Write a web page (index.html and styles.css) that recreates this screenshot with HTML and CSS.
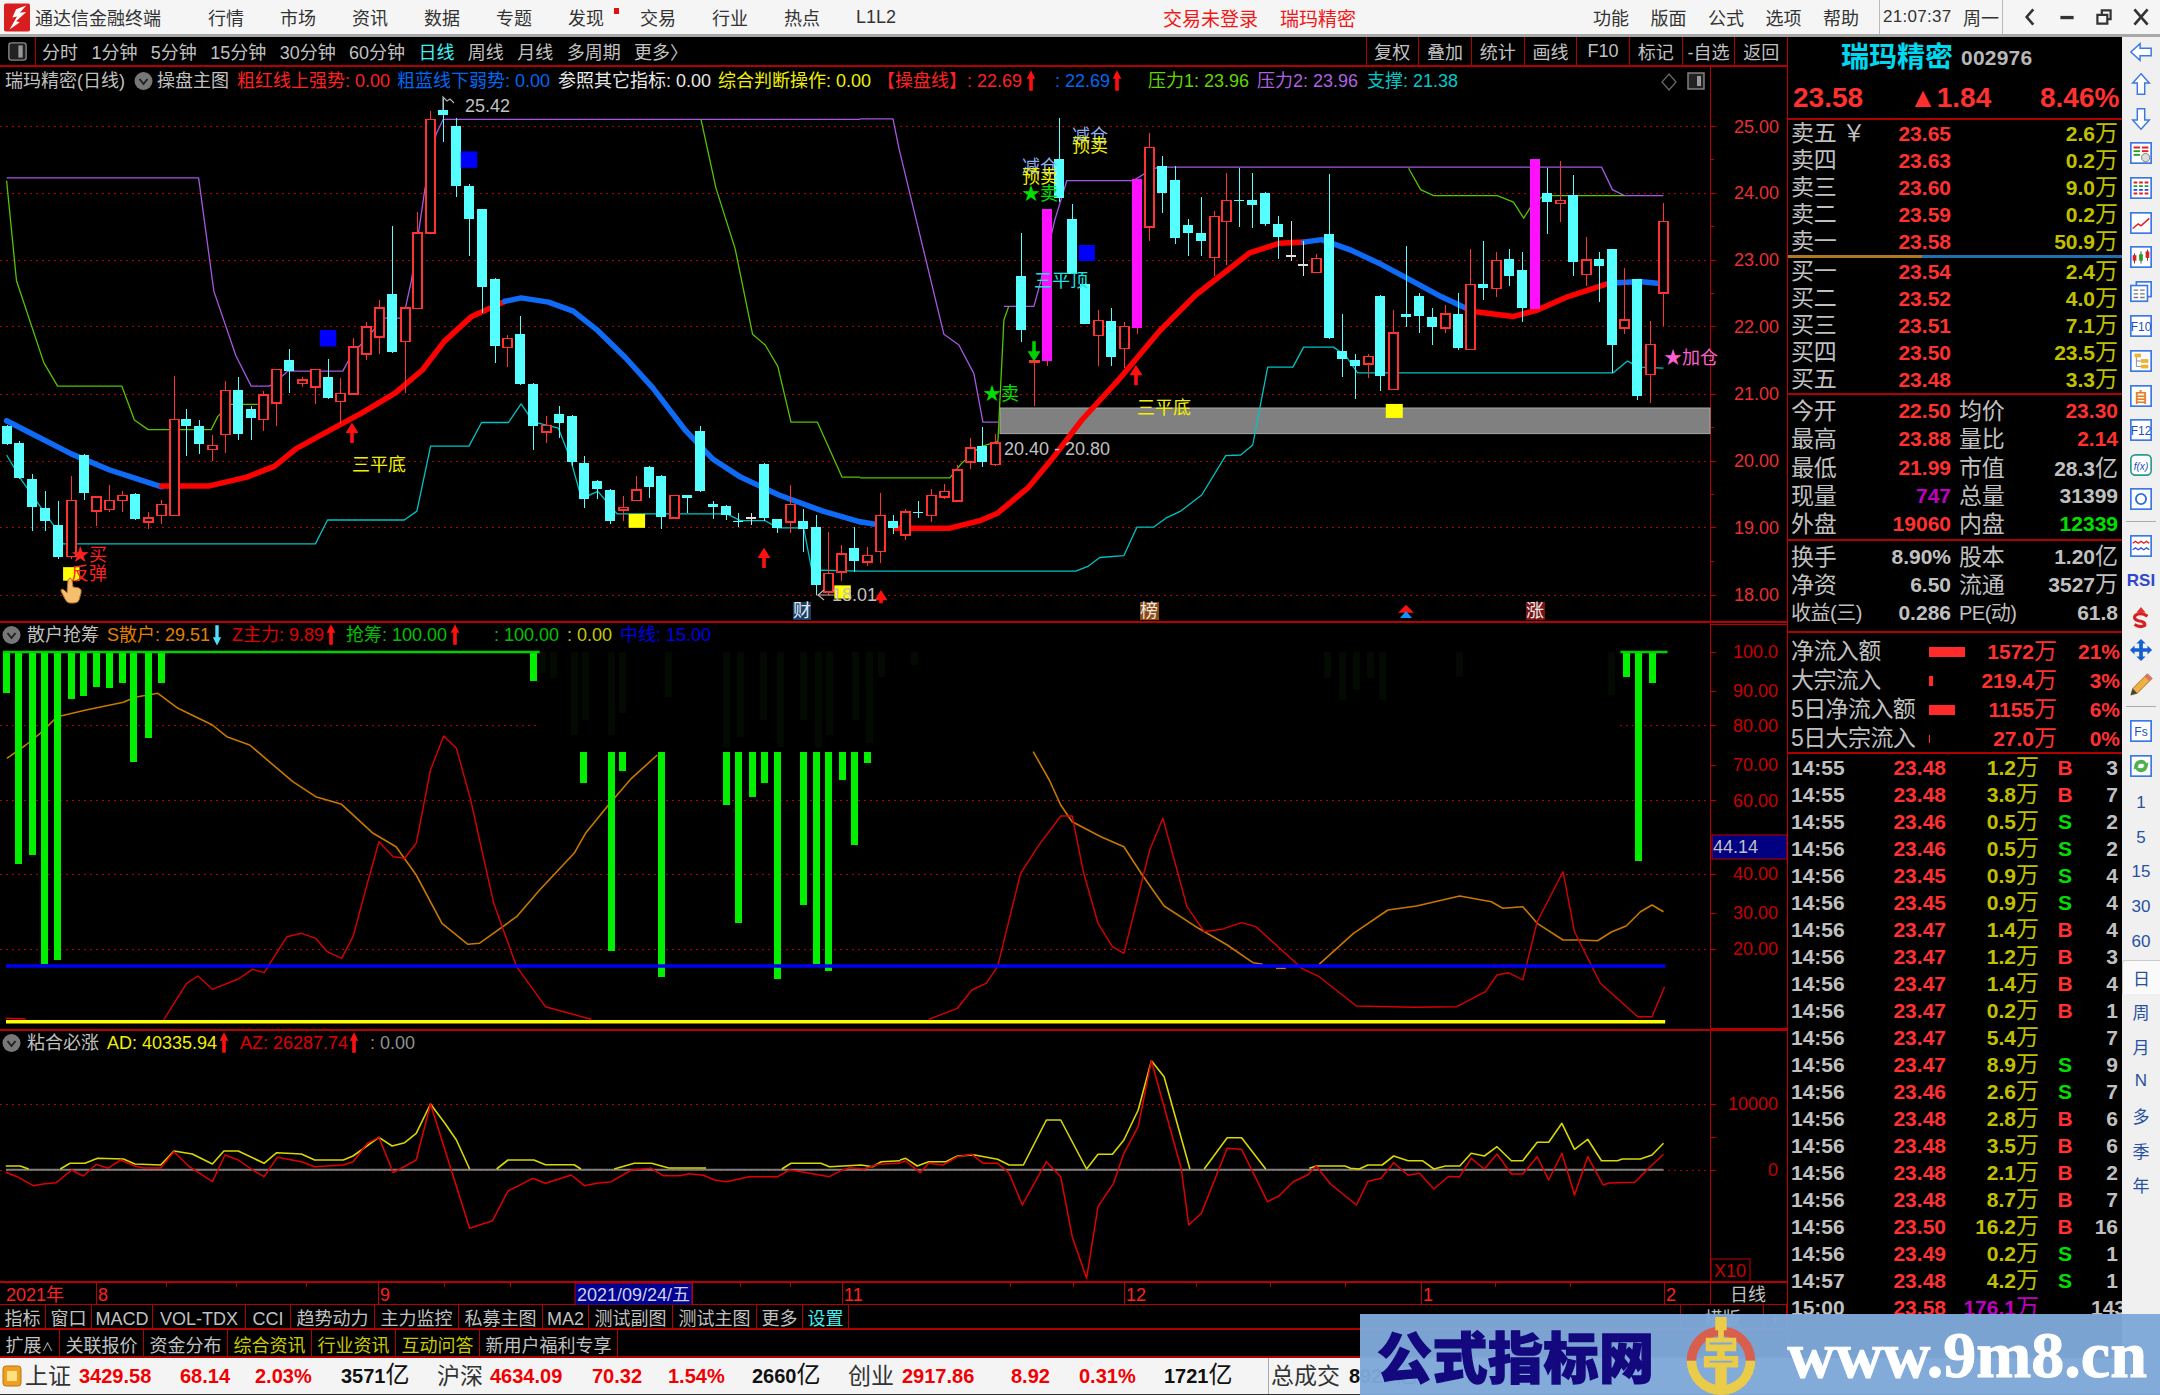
FILE: index.html
```html
<!DOCTYPE html>
<html lang="zh-CN">
<head>
<meta charset="utf-8">
<title>通达信金融终端</title>
<link rel="stylesheet" href="styles.css">
</head>
<body>
<div class="app">
  <header class="titlebar">
    <svg class="logo" viewBox="0 0 28 30"><rect width="28" height="30" rx="2" fill="#d81e1e"/><path d="M24 2 L13 6 L9 15 L14 14 L6 28 L17 20 L13 19 L24 9 L17 10 Z" fill="#fff"/></svg>
    <span class="brand">通达信金融终端</span>
    <nav class="menu">
      <span>行情</span><span>市场</span><span>资讯</span><span>数据</span><span>专题</span><span class="has-dot">发现</span><span>交易</span><span>行业</span><span>热点</span><span>L1L2</span>
    </nav>
    <div class="notice"><span>交易未登录</span><span>瑞玛精密</span></div>
    <nav class="menu-right"><span>功能</span><span>版面</span><span>公式</span><span>选项</span><span>帮助</span></nav>
    <div class="clock"><span class="clock-time">21:07:37</span><span>周一</span></div>
    <div class="winbtns">
      <svg viewBox="0 0 20 20"><path d="M13 3 L7 10 L13 17" fill="none" stroke="#333" stroke-width="2.4"/></svg>
      <svg viewBox="0 0 20 20"><rect x="4" y="9" width="12" height="3" fill="#333"/></svg>
      <svg viewBox="0 0 20 20"><path d="M7 3h10v10h-3v4H3V7h4z M9 5v2h5v4h1V5z M5 9v6h7V9z" fill="#333" fill-rule="evenodd"/></svg>
      <svg viewBox="0 0 20 20"><path d="M4 3 L16 17 M16 3 L4 17" stroke="#333" stroke-width="2.4"/></svg>
    </div>
  </header>

  <div class="workspace">
    <main class="chartcol">
      <div class="toolbar">
        <div class="tb-toggle"><svg viewBox="0 0 22 22"><rect x="1" y="1" width="20" height="20" rx="3" fill="#222" stroke="#888" stroke-width="1.6"/><rect x="12" y="4" width="5" height="14" fill="#999"/></svg></div>
        <div class="tb-periods">
          <span>分时</span><span>1分钟</span><span>5分钟</span><span>15分钟</span><span>30分钟</span><span>60分钟</span><span class="is-active">日线</span><span>周线</span><span>月线</span><span>多周期</span><span>更多〉</span>
        </div>
        <div class="tb-actions"><span>复权</span><span>叠加</span><span>统计</span><span>画线</span><span>F10</span><span>标记</span><span>-自选</span><span>返回</span></div>
      </div>

      <svg id="chart" class="chart-canvas" viewBox="0 67 1787 1238">
        <g id="plots"></g>
        <g class="labels">
          <text class="t gray" x="5" y="81">瑞玛精密(日线)</text>
          <text class="t gray" x="157" y="81">操盘主图</text>
          <text class="t red" x="237" y="81">粗红线上强势: 0.00</text>
          <text class="t blue" x="397" y="81">粗蓝线下弱势: 0.00</text>
          <text class="t white" x="558" y="81">参照其它指标: 0.00</text>
          <text class="t yellow" x="718" y="81">综合判断操作: 0.00</text>
          <text class="t red" x="877" y="81">【操盘线】: 22.69</text>
          <text class="t blue" x="1055" y="81">: 22.69</text>
          <text class="t green" x="1148" y="81">压力1: 23.96</text>
          <text class="t purple" x="1257" y="81">压力2: 23.96</text>
          <text class="t teal" x="1367" y="81">支撑: 21.38</text>

          <text class="t gray" x="465" y="106">25.42</text>
          <text class="t gray" x="1004" y="449">20.40 - 20.80</text>
          <text class="t gray" x="832" y="595">18.01</text>

          <text class="t yellow" x="352" y="465">三平底</text>
          <text class="t yellow" x="1137" y="408">三平底</text>
          <text class="t cyan" x="1034" y="281">三平顶</text>
          <text class="t red" x="71" y="555">★买</text>
          <text class="t red" x="71" y="574">反弹</text>
          <text class="t paleblue" x="1072" y="136">减仓</text>
          <text class="t yellow" x="1072" y="146">预卖</text>
          <text class="t paleblue" x="1022" y="167">减仓</text>
          <text class="t yellow" x="1022" y="177">预卖</text>
          <text class="t brightgreen" x="1022" y="194">★卖</text>
          <text class="t brightgreen" x="983" y="394">★卖</text>
          <text class="t pink" x="1664" y="358">★加仓</text>

          <rect class="mark-blue" x="793" y="602" width="18" height="18"/>
          <text class="t mark-text" x="793" y="611">财</text>
          <rect class="mark-brown" x="1140" y="602" width="19" height="18"/>
          <text class="t mark-text" x="1140" y="611">榜</text>
          <rect class="mark-maroon" x="1526" y="602" width="19" height="18"/>
          <text class="t mark-text" x="1526" y="611">涨</text>

          <text class="t axis" x="1734" y="127">25.00</text>
          <text class="t axis" x="1734" y="193">24.00</text>
          <text class="t axis" x="1734" y="260">23.00</text>
          <text class="t axis" x="1734" y="327">22.00</text>
          <text class="t axis" x="1734" y="394">21.00</text>
          <text class="t axis" x="1734" y="461">20.00</text>
          <text class="t axis" x="1734" y="528">19.00</text>
          <text class="t axis" x="1734" y="595">18.00</text>

          <text class="t gray" x="27" y="635">散户抢筹</text>
          <text class="t orange" x="107" y="635">S散户: 29.51</text>
          <text class="t dimred" x="232" y="635">Z主力: 9.89</text>
          <text class="t dimgreen" x="346" y="635">抢筹: 100.00</text>
          <text class="t dimgreen" x="494" y="635">: 100.00</text>
          <text class="t dimyellow" x="567" y="635">: 0.00</text>
          <text class="t navy" x="620" y="635">中线: 15.00</text>

          <text class="t axis2" x="1733" y="652">100.0</text>
          <text class="t axis2" x="1733" y="691">90.00</text>
          <text class="t axis2" x="1733" y="726">80.00</text>
          <text class="t axis2" x="1733" y="765">70.00</text>
          <text class="t axis2" x="1733" y="801">60.00</text>
          <text class="t axis2" x="1733" y="874">40.00</text>
          <text class="t axis2" x="1733" y="913">30.00</text>
          <text class="t axis2" x="1733" y="949">20.00</text>
          <rect class="axis-flag" x="1712" y="835" width="75" height="24"/>
          <text class="t gray" x="1713" y="847">44.14</text>

          <text class="t gray" x="27" y="1043">粘合必涨</text>
          <text class="t yellow" x="107" y="1043">AD: 40335.94</text>
          <text class="t dimred" x="240" y="1043">AZ: 26287.74</text>
          <text class="t dimgray" x="370" y="1043">: 0.00</text>
          <text class="t axis2" x="1728" y="1104">10000</text>
          <text class="t axis2" x="1768" y="1170">0</text>
          <rect class="x10" x="1711" y="1259" width="39" height="23"/>
          <text class="t axis2" x="1714" y="1271">X10</text>

          <text class="t red" x="6" y="1295">2021年</text>
          <text class="t red" x="98" y="1295">8</text>
          <text class="t red" x="380" y="1295">9</text>
          <rect class="date-flag" x="575" y="1283" width="117" height="22"/>
          <text class="t light" x="577" y="1295">2021/09/24/五</text>
          <text class="t red" x="844" y="1295">11</text>
          <text class="t red" x="1126" y="1295">12</text>
          <text class="t red" x="1423" y="1295">1</text>
          <text class="t red" x="1666" y="1295">2</text>
          <text class="t gray" x="1730" y="1295">日线</text>
        </g>
      </svg>

      <div class="tabs">
        <span class="tab-tight">指标</span><span class="tab-tight">窗口</span><span class="tab-macd">MACD</span><span class="tab-wide">VOL-TDX</span><span class="tab-cci">CCI</span><span>趋势动力</span><span>主力监控</span><span>私募主图</span><span class="tab-slim">MA2</span><span>测试副图</span><span>测试主图</span><span class="tab-tight">更多</span><span class="tab-cyan tab-tight">设置</span>
        <span class="tab-end">横版</span><span>+</span>
      </div>
      <div class="tabs tabs-second">
        <span>扩展<small>∧</small></span><span>关联报价</span><span>资金分布</span><span class="tab-yellow">综合资讯</span><span class="tab-yellow">行业资讯</span><span class="tab-yellow">互动问答</span><span>新用户福利专享</span>
      </div>
    </main>

    <aside class="quote">
      <div class="q-name"><span class="q-title">瑞玛精密</span><span class="q-code">002976</span></div>
      <div class="q-price"><span>23.58</span><span>▲1.84</span><span>8.46%</span></div>
      <section class="book">
        <div class="book-row"><b class="lb">卖五 ￥</b><b class="up">23.65</b><b class="vol">2.6<i>万</i></b></div>
        <div class="book-row"><b class="lb">卖四</b><b class="up">23.63</b><b class="vol">0.2<i>万</i></b></div>
        <div class="book-row"><b class="lb">卖三</b><b class="up">23.60</b><b class="vol">9.0<i>万</i></b></div>
        <div class="book-row"><b class="lb">卖二</b><b class="up">23.59</b><b class="vol">0.2<i>万</i></b></div>
        <div class="book-row"><b class="lb">卖一</b><b class="up">23.58</b><b class="vol">50.9<i>万</i></b></div>
      </section>
      <div class="book-split"><span></span><span></span></div>
      <section class="book book-buy">
        <div class="book-row"><b class="lb">买一</b><b class="up">23.54</b><b class="vol">2.4<i>万</i></b></div>
        <div class="book-row"><b class="lb">买二</b><b class="up">23.52</b><b class="vol">4.0<i>万</i></b></div>
        <div class="book-row"><b class="lb">买三</b><b class="up">23.51</b><b class="vol">7.1<i>万</i></b></div>
        <div class="book-row"><b class="lb">买四</b><b class="up">23.50</b><b class="vol">23.5<i>万</i></b></div>
        <div class="book-row"><b class="lb">买五</b><b class="up">23.48</b><b class="vol">3.3<i>万</i></b></div>
      </section>
      <section class="stats">
        <div class="stat-row"><b class="lb">今开</b><b class="up">22.50</b><b class="lb">均价</b><b class="up">23.30</b></div>
        <div class="stat-row"><b class="lb">最高</b><b class="up">23.88</b><b class="lb">量比</b><b class="up">2.14</b></div>
        <div class="stat-row"><b class="lb">最低</b><b class="up">21.99</b><b class="lb">市值</b><b class="num">28.3<i>亿</i></b></div>
        <div class="stat-row"><b class="lb">现量</b><b class="mag">747</b><b class="lb">总量</b><b class="num">31399</b></div>
        <div class="stat-row"><b class="lb">外盘</b><b class="up">19060</b><b class="lb">内盘</b><b class="dn">12339</b></div>
      </section>
      <section class="stats stats-second">
        <div class="stat-row"><b class="lb">换手</b><b class="num">8.90%</b><b class="lb">股本</b><b class="num">1.20<i>亿</i></b></div>
        <div class="stat-row"><b class="lb">净资</b><b class="num">6.50</b><b class="lb">流通</b><b class="num">3527<i>万</i></b></div>
        <div class="stat-row"><b class="lb lb-tight">收益(三)</b><b class="num">0.286</b><b class="lb lb-tight">PE(动)</b><b class="num">61.8</b></div>
      </section>
      <section class="flow">
        <div class="flow-row"><b class="lb">净流入额</b><span class="flow-bar" style="width:36px"></span><b class="up">1572<i>万</i></b><b class="up">21%</b></div>
        <div class="flow-row"><b class="lb">大宗流入</b><span class="flow-bar" style="width:4px"></span><b class="up">219.4<i>万</i></b><b class="up">3%</b></div>
        <div class="flow-row"><b class="lb">5日净流入额</b><span class="flow-bar" style="width:26px"></span><b class="up">1155<i>万</i></b><b class="up">6%</b></div>
        <div class="flow-row"><b class="lb">5日大宗流入</b><span class="flow-bar flow-bar-thin" style="width:1px"></span><b class="up">27.0<i>万</i></b><b class="up">0%</b></div>
      </section>
      <section class="trades" id="trades"></section>
    </aside>

    <nav class="strip">
      <div class="tool"><svg viewBox="0 0 26 26"><path class="ar" d="M2 13 L12 4 V9 H24 V17 H12 V22 Z"/></svg></div>
      <div class="tool"><svg viewBox="0 0 26 26"><path class="ar" d="M13 2 L22 12 H17 V24 H9 V12 H4 Z"/></svg></div>
      <div class="tool"><svg viewBox="0 0 26 26"><path class="ar" d="M13 24 L22 14 H17 V2 H9 V14 H4 Z"/></svg></div>
      <div class="tool"><svg viewBox="0 0 26 26"><rect class="fr" x="2" y="2" width="22" height="22"/><path d="M5 7h7M14 7h7" stroke="#e02020" stroke-width="2"/><path d="M5 11h7" stroke="#20a020" stroke-width="2"/><path d="M14 11h7" stroke="#e02020" stroke-width="2"/><path d="M5 15h7" stroke="#20a020" stroke-width="2"/><circle cx="18" cy="18" r="4.5" fill="#ddd" stroke="#777"/></svg></div>
      <div class="tool"><svg viewBox="0 0 26 26"><rect class="fr" x="2" y="2" width="22" height="22"/><path d="M5 7h16" stroke="#e02020" stroke-width="2" stroke-dasharray="4 2"/><path d="M5 11h16" stroke="#20a020" stroke-width="2" stroke-dasharray="4 2"/><path d="M5 15h16" stroke="#2040e0" stroke-width="2" stroke-dasharray="4 2"/><path d="M5 19h16" stroke="#e02020" stroke-width="2" stroke-dasharray="4 2"/></svg></div>
      <div class="tool"><svg viewBox="0 0 26 26"><rect class="fr" x="2" y="2" width="22" height="22"/><path d="M4 19 L10 14 L13 16 L22 8" fill="none" stroke="#e02020" stroke-width="1.6"/></svg></div>
      <div class="tool"><svg viewBox="0 0 26 26"><rect class="fr" x="2" y="2" width="22" height="22"/><path d="M6 9v11M13 7v13M20 5v12" stroke="#333"/><rect x="4" y="11" width="4" height="6" fill="#e02020"/><rect x="11" y="10" width="4" height="7" fill="#20a020"/><rect x="18" y="7" width="4" height="7" fill="#e02020"/></svg></div>
      <div class="tool"><svg viewBox="0 0 26 26"><rect class="fr" x="8" y="2" width="16" height="16"/><rect class="fr" x="2" y="6" width="18" height="17"/><path d="M5 11h5M12 11h5M5 15h5M12 15h5M5 19h5M12 19h5" stroke="#777" stroke-width="1.5"/></svg></div>
      <div class="tool"><svg viewBox="0 0 26 26"><rect class="fr" x="2" y="2" width="22" height="22"/><text class="ic-t" x="13" y="18">F10</text></svg></div>
      <div class="tool"><svg viewBox="0 0 26 26"><rect class="fr" x="2" y="2" width="22" height="22"/><rect x="6" y="5" width="7" height="4" fill="#f0b030"/><rect x="13" y="11" width="8" height="4" fill="#f0b030"/><rect x="13" y="17" width="8" height="4" fill="#f0b030"/><path d="M8 9v10h5M8 13h5" fill="none" stroke="#888"/></svg></div>
      <div class="tool"><svg viewBox="0 0 26 26"><rect class="fr" x="2" y="2" width="22" height="22"/><text class="ic-t ic-orange" x="13" y="19">自</text></svg></div>
      <div class="tool"><svg viewBox="0 0 26 26"><rect class="fr" x="2" y="2" width="22" height="22"/><text class="ic-t" x="13" y="18">F12</text></svg></div>
      <div class="tool"><svg viewBox="0 0 26 26"><rect class="fr fr-teal" x="2" y="2" width="22" height="22" rx="5"/><text class="ic-t ic-fx" x="13" y="18">f(x)</text></svg></div>
      <div class="tool"><svg viewBox="0 0 26 26"><rect class="fr" x="2" y="2" width="22" height="22"/><circle cx="13" cy="13" r="5.5" fill="none" stroke="#2a6de0" stroke-width="2"/></svg></div>
      <div class="strip-sep"></div>
      <div class="tool"><svg viewBox="0 0 26 26"><rect class="fr" x="2" y="2" width="22" height="22"/><path d="M4 10l3-2 3 2 3-2 3 2 3-2 3 2" fill="none" stroke="#e02020" stroke-width="1.4"/><path d="M4 17l3-2 3 2 3-2 3 2 3-2 3 2" fill="none" stroke="#3050e0" stroke-width="1.4"/></svg></div>
      <div class="tool tool-rsi">RSI</div>
      <div class="tool tool-s"><svg viewBox="0 0 26 26"><path d="M13 1 L18 7 H8 Z" fill="#e03030"/><path d="M20 11 Q13 6 7 10 Q4 14 10 16 Q18 17 17 21 Q12 24 6 20" fill="none" stroke="#d82020" stroke-width="3.4"/></svg></div>
      <div class="tool"><svg viewBox="0 0 26 26"><path d="M13 1l5 5h-3v5h5v-3l5 5-5 5v-3h-5v5h3l-5 5-5-5h3v-5H6v3l-5-5 5-5v3h5V6H8z" fill="#1560d0"/></svg></div>
      <div class="tool"><svg viewBox="0 0 26 26"><path d="M20 2 L25 7 L9 23 L2 25 L4 18 Z" fill="#f0b040" stroke="#a07020"/><path d="M20 2 L25 7 L22 10 L17 5 Z" fill="#e07070"/><path d="M4 18 L9 23 L2 25 Z" fill="#444"/></svg></div>
      <div class="strip-sep"></div>
      <div class="tool"><svg viewBox="0 0 26 26"><rect class="fr" x="2" y="2" width="22" height="22"/><text class="ic-t" x="13" y="18">Fs</text></svg></div>
      <div class="tool"><svg viewBox="0 0 26 26"><rect class="fr" x="2" y="2" width="22" height="22"/><path d="M6 12a7 7 0 0 1 13-2l2-1-1 6-5-2 2-1a5 5 0 0 0-8 1z M20 14a7 7 0 0 1-13 2l-2 1 1-6 5 2-2 1a5 5 0 0 0 8-1z" fill="#50b050"/></svg></div>
      <div class="tool tool-txt tool-first">1</div>
      <div class="tool tool-txt">5</div>
      <div class="tool tool-txt">15</div>
      <div class="tool tool-txt">30</div>
      <div class="tool tool-txt">60</div>
      <div class="tool tool-txt tool-sel">日</div>
      <div class="tool tool-txt">周</div>
      <div class="tool tool-txt">月</div>
      <div class="tool tool-txt">N</div>
      <div class="tool tool-txt">多</div>
      <div class="tool tool-txt">季</div>
      <div class="tool tool-txt">年</div>
    </nav>
  </div>

  <footer class="status">
    <svg class="st-icon" viewBox="0 0 20 22"><rect x="1" y="1" width="18" height="20" rx="3" fill="#f0a020" stroke="#c07010"/><rect x="5" y="6" width="10" height="10" fill="#ffe080"/></svg>
    <span class="cn">上证</span><b class="sred">3429.58</b><b class="sred">68.14</b><b class="sred">2.03%</b><b>3571<i>亿</i></b>
    <span class="cn">沪深</span><b class="sred">4634.09</b><b class="sred">70.32</b><b class="sred">1.54%</b><b>2660<i>亿</i></b>
    <span class="cn">创业</span><b class="sred">2917.86</b><b class="sred">8.92</b><b class="sred">0.31%</b><b>1721<i>亿</i></b>
    <span class="cn st-total">总成交</span><b>8923<i>亿</i></b>
  </footer>

  <aside class="watermark">
    <span class="wm-title">公式指标网</span>
    <svg class="wm-logo" viewBox="0 0 84 84">
      <path d="M6 48 A36 36 0 0 1 78 48 L68 48 A26 26 0 0 0 16 48 Z" fill="#d85f4e"/>
      <path d="M6 48 A36 36 0 0 0 42 84 L42 74 A26 26 0 0 1 16 48 Z" fill="#eacb4a"/>
      <path d="M78 48 A36 36 0 0 1 42 84 L42 74 A26 26 0 0 0 68 48 Z" fill="#eacb4a"/>
      <path d="M36 2h12v14h-3v8h13v14H46v5h14v12H48v20H36V55H24V43h14v-5H26V24h13v-8h-3z" fill="#eacb4a"/>
      <path d="M30 30h24M30 49h24" stroke="#7fa8d8" stroke-width="2"/>
    </svg>
    <span class="wm-url">www.9m8.cn</span>
  </aside>
</div>
<script src="chart.js"></script>
</body>
</html>
```
FILE: styles.css
```css
* { box-sizing: border-box; }
html, body { margin: 0; padding: 0; background: #000; }
body {
  width: 2160px; height: 1395px; overflow: hidden;
  font-family: "Liberation Sans", "Noto Sans CJK SC", sans-serif;
  font-size: 18px;
}
.app { position: relative; width: 2160px; height: 1395px; display: flex; flex-direction: column; }

/* title bar */
.titlebar {
  height: 37px; flex: none; display: flex; align-items: center;
  background: #f5f5f5; border-bottom: 3px solid #a8a8a8; color: #333; padding-left: 4px;
}
.logo { width: 26px; height: 29px; flex: none; }
.brand { margin-left: 5px; width: 126px; white-space: nowrap; }
.menu { margin-left: 47px; width: 720px; display: flex; align-items: center; }
.menu span { width: 72px; position: relative; }
.has-dot::after { content: ""; position: absolute; left: 46px; top: 4px; width: 5px; height: 6px; background: #e01010; }
.notice { margin-left: 235px; display: flex; gap: 22px; color: #f01818; font-size: 19px; }
.menu-right { margin-left: auto; display: flex; gap: 21.5px; }
.clock { width: 124px; height: 34px; margin-left: 20px; display: flex; align-items: center; justify-content: space-between; padding: 0 3px; border-left: 1px solid #bbb; border-right: 1px solid #bbb; }
.clock-time { font-size: 17px; letter-spacing: .3px; }
.winbtns { width: 157px; display: flex; justify-content: space-between; padding: 0 8px 0 16px; }
.winbtns svg { width: 22px; height: 22px; }

/* workspace */
.workspace { height: 1321px; flex: none; display: flex; }
.chartcol { width: 1788px; flex: none; border-right: 1px solid #c00000; display: flex; flex-direction: column; background: #000; color: #c0c0c0; }

.toolbar { height: 30px; flex: none; display: flex; align-items: center; border-bottom: 2px solid #b00000; }
.tb-toggle { width: 36px; height: 28px; display: flex; align-items: center; justify-content: center; border-right: 1px solid #b00000; }
.tb-toggle svg { width: 19px; height: 19px; }
.tb-periods { display: flex; gap: 13.4px; margin-left: 6px; white-space: nowrap; }
.is-active { color: #40f0f0; }
.tb-actions { margin-left: auto; display: flex; height: 28px; }
.tb-actions span { width: 52.7px; display: flex; align-items: center; justify-content: center; border-left: 1px solid #b00000; }

.chart-canvas { width: 1787px; height: 1238px; flex: none; display: block; }

.t { font-family: "Liberation Sans", "Noto Sans CJK SC", sans-serif; font-size: 18px; dominant-baseline: central; }
.gray { fill: #c0c0c0; } .white { fill: #e8e8e8; } .light { fill: #d0d0e8; } .dimgray { fill: #909090; }
.red { fill: #ff2020; } .dimred { fill: #e00000; } .blue { fill: #0068f0; } .navy { fill: #0000e0; }
.yellow { fill: #f0f000; } .dimyellow { fill: #c8c800; } .orange { fill: #e08000; }
.green { fill: #60d800; } .dimgreen { fill: #00c000; } .brightgreen { fill: #00e000; }
.purple { fill: #b060e0; } .teal { fill: #00c8c8; } .cyan { fill: #20e0e0; } .pink { fill: #ff60d0; } .paleblue { fill: #90b0f0; }
.axis { fill: #e83030; } .axis2 { fill: #c80000; }
.mark-text { fill: #e8e8e8; }
.mark-blue { fill: #14406e; } .mark-brown { fill: #8a4a10; } .mark-maroon { fill: #7a1414; }
.axis-flag { fill: #000080; stroke: #c00000; } .x10 { fill: none; stroke: #c00000; } .date-flag { fill: #000090; stroke: #c00000; }

.frame { stroke: #b80000; stroke-width: 2; fill: none; shape-rendering: crispEdges; }
.thin { stroke: #b80000; stroke-width: 1; fill: none; shape-rendering: crispEdges; }
.dots { stroke: #b00000; stroke-width: 1; stroke-dasharray: 2 4; shape-rendering: crispEdges; }
.wick-up { stroke: #ff3232; stroke-width: 1.2; shape-rendering: crispEdges; }
.wick-cy { stroke: #55ffff; stroke-width: 1.2; shape-rendering: crispEdges; }
.wick-wh { stroke: #e0e0e0; stroke-width: 1.2; shape-rendering: crispEdges; }
.body-up { fill: #000; stroke: #ff3232; stroke-width: 1.5; shape-rendering: crispEdges; }
.body-cy { fill: #55ffff; shape-rendering: crispEdges; }
.body-wh { fill: #e0e0e0; shape-rendering: crispEdges; }
.body-mg { fill: #ff10ff; shape-rendering: crispEdges; }
.ma-red, .ma-blue { fill: none; stroke-width: 5.5; stroke-linecap: round; stroke-linejoin: round; }
.ma-red { stroke: #ff0000; } .ma-blue { stroke: #0f6bf5; }
.l-purple, .l-green, .l-teal, .l-orange, .l-red2, .l-yel2, .l-red3 { fill: none; stroke-width: 1.3; stroke-linejoin: round; }
.l-purple { stroke: #a558e0; } .l-green { stroke: #56c400; } .l-teal { stroke: #00c4c4; }
.l-orange { stroke: #c87800; stroke-width: 1.6; } .l-red2 { stroke: #d80000; stroke-width: 1.4; }
.l-yel2 { stroke: #d8d800; stroke-width: 1.6; } .l-red3 { stroke: #e00000; stroke-width: 1.5; }
.band { fill: #808080; stroke: #a8a8a8; stroke-width: 1; }
.sq-blue { fill: #0000ff; } .sq-yellow { fill: #ffff00; }
.bar-green { fill: #00f000; shape-rendering: crispEdges; } .bar-dim { fill: #020a02; shape-rendering: crispEdges; }
.line-blue { stroke: #0000f0; stroke-width: 3.5; } .line-yellow { stroke: #ffff00; stroke-width: 3.5; } .line-green { stroke: #00d000; stroke-width: 2.5; }
.line-zero { stroke: #808080; stroke-width: 2; }
.arrow-red { fill: #ff1010; stroke: #ff1010; stroke-width: 1.6; } .arrow-green { fill: #00d000; stroke: #00d000; stroke-width: 1.6; } .arrow-cyan { fill: #50e0ff; stroke: #50e0ff; stroke-width: 1.4; } .arrow-blue { fill: #1090ff; }
.flagmark { fill: none; stroke: #b0b0b0; stroke-width: 1.2; }
.legend-dot { fill: #777; } .legend-chev { fill: none; stroke: #222; stroke-width: 2; }
.toggle-box { fill: #222; stroke: #888; stroke-width: 1.4; } .toggle-in { fill: #999; }
.diamond { fill: none; stroke: #666; stroke-width: 1.3; }
.hand { fill: #f4c070; stroke: #c07020; stroke-width: 1; }

.tabs { height: 25px; flex: none; display: flex; align-items: stretch; border-bottom: 2px solid #b00000; white-space: nowrap; line-height: 22px; }
.tabs-second { height: 28px; }
.tabs span { padding: 3px 5.5px 0; border-right: 1px solid #b00000; }
.tabs-second span { padding: 5px 5.5px 0; }
.tabs small { font-size: 12px; }
.tabs .tab-tight { padding: 3px 4.5px 0; }
.tabs .tab-macd { padding: 3px 3.5px 0; }
.tabs .tab-wide { padding: 3px 7px 0; }
.tabs .tab-cci { padding: 3px 6.5px 0; }
.tabs .tab-slim { padding: 3px 4px 0; }
.tab-cyan { color: #40f0f0; } .tab-yellow { color: #c8c800; }
.tabs .tab-end { margin-left: auto; border-left: 1px solid #b00000; padding: 3px 23px 0; }

/* quote panel */
.quote { width: 334px; flex: none; height: 1321px; overflow: hidden; background: #000; color: #c0c0c0; display: flex; flex-direction: column; }
.quote b { font-weight: bold; font-size: 21px; }
.quote i { font-style: normal; font-weight: normal; font-size: 23px; margin-left: 0; }
.quote .lb { font-weight: normal; font-size: 23px; white-space: nowrap; letter-spacing: -.3px; }
.quote .lb-tight { font-size: 20px; letter-spacing: -.5px; }
.up { color: #ff3030; text-align: right; } .mag { color: #c000c0; text-align: right; } .dn { color: #00e000; text-align: right; } .num { color: #c0c0c0; text-align: right; white-space: nowrap; }
.vol { color: #c0c000; text-align: right; white-space: nowrap; }
.q-name { height: 36px; flex: none; display: flex; align-items: center; padding-left: 53px; gap: 8px; }
.q-title { font-size: 28px; font-weight: bold; color: #00d8f0; }
.q-code { font-size: 21px; font-weight: bold; color: #b8b8b8; letter-spacing: .2px; margin-top: 6px; }
.q-price { height: 47px; flex: none; display: grid; grid-template-columns: 116px 131px 1fr; align-items: center; padding: 5px 5px 0; border-bottom: 2px solid #b00000; color: #ff3030; font-size: 28px; font-weight: bold; }
.q-price span:nth-child(3) { text-align: right; }
.book { padding-left: 3px; padding-right: 4px; flex: none; }
.book-row { height: 27px; display: grid; grid-template-columns: 60px 100px 1fr; align-items: center; line-height: 27px; }
.book-split { height: 3px; flex: none; display: flex; }
.book-split span { flex: 1; background: #b07820; } .book-split span + span { flex: 1.5; background: #2070b0; }
.book-buy { border-bottom: 2px solid #b00000; height: 137px; }
.stats { padding: 2px 4px 0 3px; flex: none; height: 146px; border-bottom: 2px solid #b00000; }
.stat-row { height: 28.3px; display: grid; grid-template-columns: 60px 100px 60px 1fr; column-gap: 0; align-items: center; line-height: 28px; }
.stat-row .lb + b + .lb { margin-left: 8px; }
.stats-second { height: 92px; padding-top: 1px; }
.flow { padding: 4px 2px 0 3px; flex: none; height: 121px; border-bottom: 2px solid #b00000; }
.flow-row { height: 29px; display: grid; grid-template-columns: 138px 40px 88px 1fr; align-items: center; line-height: 29px; }
.flow-row .lb { letter-spacing: -.6px; }
.flow-bar { height: 10px; background: #ff2a2a; display: block; }
.flow-bar-thin { height: 8px; }
.trades { padding: 0 4px 0 3px; flex: none; }
.trade-row { height: 27px; display: grid; grid-template-columns: 60px 95px 93px 52px 1fr; align-items: center; line-height: 27px; }
.trade-row .time, .trade-row .cnt { color: #c0c0c0; }
.trade-row .cnt { text-align: right; }
.side { padding-left: 0; text-align: center; }
.side-b { color: #ff3030; } .side-s { color: #00e000; }

/* right strip */
.strip { width: 38px; flex: none; height: 1321px; background: #f0f0f0; display: flex; flex-direction: column; align-items: center; overflow: hidden; }
.tool { height: 34.6px; width: 38px; flex: none; display: flex; align-items: center; justify-content: center; }
.tool:first-child { height: 30px; }
.tool svg { width: 24px; height: 24px; }
.strip-sep { flex: none; width: 30px; height: 1px; background: #aaa; margin: 4px 0 7px; }
.tool-s { padding-top: 6px; }
.ar { fill: #fff; stroke: #3a78e6; stroke-width: 1.6; }
.fr { fill: #fff; stroke: #3a78e6; stroke-width: 1.8; } .fr-teal { stroke: #2a9a90; }
.ic-t { font-family: "Liberation Sans", "Noto Sans CJK SC", sans-serif; font-size: 13px; fill: #2050c0; text-anchor: middle; }
.ic-orange { fill: #e88020; font-size: 15px; font-weight: bold; } .ic-fx { font-size: 11px; font-style: italic; }
.tool-txt { font-size: 17px; color: #2850a0; }
.tool-first { margin-top: 3px; }
.tool-rsi { font-weight: bold; font-size: 17px; color: #3048c8; }
.tool-sel { background: #fafafa; border: 1px solid #ccc; border-right: 0; border-bottom: 0; border-radius: 3px 0 0 0; margin-top: 1px; }

/* status bar */
.status { height: 37px; flex: none; position: relative; background: #f4f4f4; border-bottom: 1px solid #303030; color: #111; display: grid; align-items: center; white-space: nowrap;
  grid-template-columns: 25px 54px 101px 75px 86px 96px 53px 102px 76px 84px 96px 54px 109px 68px 85px 104px 81px 1fr; }
.status b { font-size: 20px; font-weight: bold; line-height: 36px; display: flex; align-items: baseline; }
.status i { font-style: normal; font-weight: normal; font-size: 24px; line-height: 0; }
.status .cn { font-size: 23px; color: #333; line-height: 36px; }
.sred { color: #f00000; }
.st-icon { width: 20px; height: 22px; margin-left: 2px; }
.status .st-total { border-left: 1px solid #aaa; padding-left: 2px; }

/* watermark, lies over the bottom-right corner */
.watermark { position: absolute; left: 1360px; top: 1314px; width: 800px; height: 81px; background: rgba(127,168,216,.97); display: flex; align-items: center; padding-left: 17px; }
.wm-title { font-size: 55px; font-weight: 900; color: #14087f; letter-spacing: .5px; -webkit-text-stroke: 1.4px #14087f; white-space: nowrap; line-height: 81px; font-family: "Noto Sans CJK SC", sans-serif; }
.wm-logo { width: 80px; height: 80px; flex: none; margin-left: 26px; }
.wm-url { margin-left: 27px; font-family: "Liberation Serif", serif; font-weight: bold; font-size: 66px; color: #fff; white-space: nowrap; line-height: 81px; letter-spacing: 0; -webkit-text-stroke: 1px #fff; }
```
FILE: chart.js
```js
const NS = 'http://www.w3.org/2000/svg';
const plots = document.getElementById('plots');

function el(name, attrs, parent) {
  const n = document.createElementNS(NS, name);
  for (const k in attrs) n.setAttribute(k, attrs[k]);
  (parent || plots).appendChild(n);
  return n;
}
const X7 = x => x / 1.823, X8 = x => 860 + x / 1.668, YM = y => 70 + y / 2.8;
const X9 = x => x / 1.742, X10 = x => 900 + x / 1.742, Y2 = y => 620 + y / 3, Y3 = y => 1020 + y / 3;

function line(x1, y1, x2, y2, cls) { el('line', { x1, y1, x2, y2, class: cls }); }
function rect(x, y, width, height, cls) { el('rect', { x, y, width, height, class: cls }); }
function poly(pairs, fx, fy, cls) {
  const pts = [];
  for (let i = 0; i < pairs.length; i += 2) pts.push(fx(pairs[i]).toFixed(1) + ',' + fy(pairs[i + 1]).toFixed(1));
  el('polyline', { points: pts.join(' '), class: cls });
}
function arrowUp(x, y, len, cls) {
  el('path', { d: `M${x} ${y} l-5 8 h4 v${len - 8} h2 v-${len - 8} h4 z`, class: cls });
}
function arrowDown(x, y, len, cls) {
  el('path', { d: `M${x} ${y + len} l-5 -8 h4 v-${len - 8} h2 v${len - 8} h4 z`, class: cls });
}
function thinUp(x, y, cls) { el('path', { d: `M${x} ${y} l-3 6 h2 v12 h2 v-12 h2 z`, class: cls }); }
function thinDown(x, y, cls) { el('path', { d: `M${x} ${y + 18} l-3 -6 h2 v-12 h2 v12 h2 z`, class: cls }); }

/* ---- frames and grid ---- */
[158, 343, 533, 717, 906, 1095, 1280, 1470].forEach(y => {
  const yy = Math.round(YM(y));
  line(0, yy, 1710, yy, 'dots');
  line(1710, yy, 1716, yy, 'thin');
});
[250, 438, 625, 812, 1000, 1188, 1375].forEach(y => { const yy = Math.round(YM(y)); line(1710, yy, 1714, yy, 'thin'); });

[800, 874, 949].forEach(y => line(0, y, 1710, y, 'dots'));
[652, 691, 725, 765, 800, 874, 913, 949].forEach(y => line(1711, y, 1716, y, 'thin'));
[1104, 1170].forEach(y => line(0, y, 1710, y, 'dots'));
[1104, 1137, 1170].forEach(y => line(1711, y, 1716, y, 'thin'));

line(0, 622, 1787, 622, 'frame');
line(1711, 624, 1787, 624, 'thin');
line(0, 1030, 1787, 1030, 'frame');
line(1711, 1028, 1787, 1028, 'thin');
line(0, 1282, 1787, 1282, 'frame');
line(1710, 67, 1710, 1305, 'thin');
line(0, 1304, 1787, 1304, 'thin');

[96, 378, 842, 1124, 1421, 1664].forEach(x => line(x, 1282, x, 1304, 'thin'));
[575, 692].forEach(x => line(x, 1282, x, 1304, 'thin'));
[166, 236, 306, 444, 510, 740, 790, 1010, 1073, 1196, 1270, 1345, 1495, 1570].forEach(x => line(x, 1282, x, 1287, 'thin'));

/* ---- main panel lines ---- */
rect(1000, 408, 710, 25.6, 'band');

poly([12,302,362,302,375,450,390,620,430,800,458,885,490,885,497,880,525,843,625,843,640,800,700,695,735,695,750,590,775,330,795,180,808,138,1568,138], X7, YM, 'l-purple');
poly([0,137,55,137,65,220,140,740,165,770,190,850,205,986,230,986], X8, YM, 'l-purple');
poly([240,662,290,662,300,600,325,420,345,310,455,310,475,290,497,272,1237,272,1255,335,1275,352,1340,352], X8, YM, 'l-purple');

poly([12,310,30,590,80,820,105,885,222,885,245,980,270,1007,385,1007,397,970,420,936,470,936], X7, YM, 'l-green');
poly([1278,138,1305,330,1340,500,1372,740,1395,770,1418,830,1442,986,1490,986,1535,1140,1568,1140], X7, YM, 'l-green');
poly([0,1142,150,1142,170,1100,200,1055,230,1040,240,700,248,662], X8, YM, 'l-green');
poly([915,275,935,335,957,352,1063,352,1090,370,1107,415,1120,380,1140,352,1275,352], X8, YM, 'l-green');

poly([12,1078,40,1150,100,1280,115,1327,575,1327,597,1260,737,1260,760,1235,785,1053,855,1053,878,987,927,987,950,935,972,985,1018,1003,1040,1090,1060,1200,1090,1180,1125,1243,1325,1243,1350,1262,1395,1262,1418,1282,1465,1282,1480,1400,1568,1403], X7, YM, 'l-teal');
poly([0,1403,360,1403,380,1390,400,1365,440,1360,462,1280,490,1280,510,1255,535,1235,570,1190,610,1080,635,1078,655,1050,680,832,722,832,740,776,790,776,810,800,830,848,1256,848,1280,815,1300,832,1340,835], X8, YM, 'l-teal');

poly([12,982,60,1020,130,1075,200,1120,250,1145,295,1167], X7, YM, 'ma-blue');
poly([295,1165,380,1165,450,1140,500,1110,540,1060,600,1010,660,960,720,905,770,840,810,760,860,690,920,648], X7, YM, 'ma-red');
poly([920,648,950,638,1000,650,1045,675,1090,730,1140,805,1190,890,1250,1010,1300,1090,1350,1140,1420,1190,1500,1235,1568,1265], X7, YM, 'ma-blue');
poly([0,1265,25,1272], X8, YM, 'ma-blue');
poly([60,1283,150,1283,200,1262,230,1240,280,1170,320,1090,370,980,430,870,500,730,560,630,650,512,700,485,740,482], X8, YM, 'ma-red');
poly([740,482,770,475,820,505,870,545,920,590,970,635,1012,668], X8, YM, 'ma-blue');
poly([1030,678,1090,690,1130,672,1180,635,1250,597], X8, YM, 'ma-red');
poly([1250,597,1300,592,1330,597], X8, YM, 'ma-blue');

/* ---- candles: high, body top, body bottom, low, kind (in zoomed y units) ---- */
const C = [
[995,998,1048,1050,'c'],[1040,1043,1143,1145,'c'],[1132,1145,1224,1290,'c'],[1180,1225,1262,1290,'c'],[1208,1275,1362,1370,'c'],[1137,1205,1362,1370,'r'],[1075,1078,1185,1203,'c'],[1195,1196,1235,1278,'r'],[1162,1205,1230,1238,'r'],[1180,1192,1206,1238,'r'],
[1185,1187,1257,1260,'c'],[1238,1254,1266,1286,'r'],[1205,1217,1248,1270,'r'],[858,978,1248,1250,'r'],[950,977,997,1082,'c'],[980,998,1048,1075,'c'],[1022,1052,1063,1095,'r'],[870,898,1020,1072,'r'],[860,897,1018,1035,'c'],[940,950,975,1035,'c'],
[900,910,978,1010,'r'],[838,838,933,998,'r'],[782,813,842,905,'c'],[860,868,878,888,'r'],[838,838,887,935,'r'],[808,860,917,920,'c'],[862,906,928,990,'r'],[750,776,907,908,'r'],[705,720,795,812,'r'],[645,666,747,795,'r'],
[438,628,790,792,'c'],[665,666,760,905,'r'],[398,457,668,670,'r'],[115,138,457,459,'r'],[75,111,127,202,'c'],[135,158,325,355,'c'],[318,326,417,522,'c'],[388,388,606,680,'c'],[582,586,774,820,'c'],[742,752,777,832,'r'],
[688,738,880,882,'c'],[875,880,997,1065,'c'],[968,995,1013,1045,'r'],[942,964,988,1030,'c'],[966,968,1098,1110,'c'],[1080,1100,1202,1225,'c'],[1148,1150,1172,1200,'c'],[1173,1175,1262,1270,'c'],[1192,1225,1232,1262,'r'],[1136,1176,1205,1207,'r'],
[1110,1112,1168,1198,'c'],[1134,1136,1252,1285,'c'],[1190,1192,1255,1258,'r'],[1190,1190,1197,1240,'c'],[998,1010,1178,1182,'c'],[1208,1215,1224,1258,'c'],[1218,1220,1245,1260,'c'],[1240,1262,1264,1280,'c'],[1240,1252,1254,1275,'w'],[1101,1103,1253,1262,'c'],
[1256,1258,1282,1295,'c'],[1162,1216,1265,1295,'r'],[1230,1262,1285,1350,'c'],[1245,1280,1442,1470,'c'],[1293,1410,1462,1470,'r'],[1330,1355,1405,1430,'r'],[1280,1338,1375,1405,'c'],[1335,1360,1378,1390,'r'],[1183,1247,1348,1380,'r'],[1245,1262,1283,1300,'c'],
[1230,1238,1302,1315,'r'],[1208,1237,1240,1255,'c'],[1172,1192,1248,1265,'r'],[1160,1180,1195,1200,'r'],[1105,1120,1207,1209,'r'],[1030,1058,1097,1118,'r'],[1000,1052,1098,1112,'c'],[1020,1045,1105,1110,'r'],null,[455,578,728,762,'c'],
[815,815,818,942,'r'],[388,388,815,830,'m'],[135,250,358,370,'c'],[375,418,570,572,'c'],[596,598,710,712,'c'],[672,702,743,828,'r'],[665,703,803,830,'c'],[705,718,780,835,'r'],[305,305,722,740,'m'],[175,217,440,480,'r'],
[240,268,345,400,'c'],[270,308,470,488,'c'],[418,435,455,522,'c'],[355,455,480,522,'c'],[395,410,525,578,'r'],[288,365,424,545,'r'],[273,363,367,440,'c'],[288,363,378,442,'c'],[341,343,432,438,'c'],[410,430,468,530,'c'],
[422,519,522,535,'w'],[480,544,547,578,'w'],[515,528,567,569,'r'],[290,460,750,752,'c'],[682,788,810,860,'c'],[795,813,828,920,'c'],[795,802,823,862,'r'],[630,632,858,900,'c'],[673,737,895,897,'r'],[492,682,690,720,'c'],
[625,632,690,735,'c'],[665,692,720,770,'c'],[658,683,723,735,'r'],[625,682,778,785,'c'],[502,600,782,784,'r'],[480,598,610,645,'c'],[510,533,612,635,'r'],[500,530,577,605,'c'],[510,560,665,705,'c'],[250,250,668,670,'m'],
[273,345,370,460,'c'],[255,365,373,425,'r'],[295,350,538,578,'c'],[468,532,572,605,'r'],[510,530,548,650,'c'],[500,502,770,848,'c'],[555,700,722,740,'r'],[584,586,912,925,'c'],[703,768,852,933,'r'],[372,424,625,718,'r']
];
C.forEach((c, i) => {
  if (!c) return;
  const x = Math.round(6.6 + 12.84 * i);
  const [h, t, b, l, k] = c.map((v, j) => j < 4 ? YM(v) : v);
  const wickCls = k === 'c' ? 'wick-cy' : k === 'w' ? 'wick-wh' : 'wick-up';
  line(x + .5, h.toFixed(1), x + .5, l.toFixed(1), wickCls);
  const bodyCls = { c: 'body-cy', r: 'body-up', w: 'body-wh', m: 'body-mg' }[k];
  const w = k === 'r' ? 9 : 10;
  const left = k === 'r' ? x - 4 : x - 5;
  rect(left, t.toFixed(1), w, Math.max(b - t, 1.5).toFixed(1), bodyCls);
});

/* markers on the main panel */
[[840,228,870,274],[583,728,613,774]].forEach(s => rect(X7(s[0]), YM(s[1]), X7(s[2]) - X7(s[0]), YM(s[3]) - YM(s[1]), 'sq-blue'));
rect(X8(365), YM(490), 16, 16, 'sq-blue');
[[115,1392,145,1430],[1146,1243,1176,1282],[1521,1443,1551,1480]].forEach(s => rect(X7(s[0]), YM(s[1]), X7(s[2]) - X7(s[0]), YM(s[3]) - YM(s[1]), 'sq-yellow'));
rect(X8(877), YM(935), 17, 14, 'sq-yellow');

arrowUp(Math.round(X7(642)), YM(992), 18, 'arrow-red');
arrowUp(Math.round(X7(1392)), YM(1342), 18, 'arrow-red');
arrowUp(Math.round(X8(460)), YM(830), 18, 'arrow-red');
arrowDown(Math.round(X8(290)), YM(762), 18, 'arrow-green');
arrowUp(Math.round(X8(35)), YM(1460), 11, 'arrow-red');
el('path', { d: 'M1406 606 l-6 6 h12 z', class: 'arrow-red' });
el('path', { d: 'M1406 611 l-6 7 h12 z', class: 'arrow-blue' });

/* flags at the extreme prices */
el('path', { d: 'M443 110 V97 L447 101 L450 99 L454 103', class: 'flagmark' });
el('path', { d: 'M824 590 L818 595 L824 600 M818 595 H834', class: 'flagmark' });

/* pointing hand */
el('path', { d: 'M68 580 q2 -4 4 0 l1 7 l6 1 q3 1 2 5 l-2 7 q-1 3 -5 3 h-4 q-3 0 -5 -4 l-4 -8 q0 -3 3 -1 l3 3 z', class: 'hand' });

/* legend furniture */
function legendDot(cx, cy) {
  el('circle', { cx, cy, r: 9, class: 'legend-dot' });
  el('path', { d: `M${cx - 4} ${cy - 2} L${cx} ${cy + 3} L${cx + 4} ${cy - 2}`, class: 'legend-chev' });
}
legendDot(143.5, 81); legendDot(11.5, 635); legendDot(11.5, 1043);
thinUp(1031, 72, 'arrow-red'); thinUp(1117, 72, 'arrow-red');
thinDown(217, 626, 'arrow-cyan'); thinUp(331, 626, 'arrow-red'); thinUp(455, 626, 'arrow-red');
thinUp(224, 1034, 'arrow-red'); thinUp(354, 1034, 'arrow-red');
el('path', { d: 'M1669 74 L1676 82 L1669 90 L1662 82 Z', class: 'diamond' });
rect(1688, 73, 16, 16, 'toggle-box');
rect(1697, 76, 4, 10, 'toggle-in');

/* ---- second panel ---- */
[[945,160],[965,175],[1000,345],[1020,300],[1065,345],[1085,280],[1165,230],[1265,385],[1290,350],[1330,300],[1360,380],[1400,300],[1425,385],[1445,345],[1490,300],[1515,370],[1535,170]].forEach(b => rect(X9(b[0]) - 3.5, 652, 7, Y2(b[1]) - 652, 'bar-dim'));
[[25,135],[745,175],[770,240],[795,210],[820,175],[840,240],[975,170],[1240,225]].forEach(b => rect(X10(b[0]) - 3.5, 652, 7, Y2(b[1]) - 652, 'bar-dim'));
line(0, 725, 540, 725, 'dots'); line(1620, 725, 1710, 725, 'dots');

poly([12,415,45,375,70,340,100,290,150,270,215,247,235,232,275,220,310,265,370,315,395,350,435,375,510,485,550,530,595,553,650,640,690,680,725,765,770,910,815,973,835,970,900,890,940,810,1000,700,1020,640,1060,555,1100,475,1145,405], X9, Y2, 'l-orange');
poly([232,395,260,480,280,555,300,605,350,650,390,680,420,760,460,858,520,925,570,975,615,1028,632,1033], X10, Y2, 'l-orange');
poly([655,1045,672,1045], X10, Y2, 'l-orange');
poly([730,1033,790,940,850,870,900,858,975,828,1030,845,1050,865,1085,860,1110,910,1155,960,1185,960,1215,962,1240,935,1265,918,1290,875,1310,855,1330,875], X10, Y2, 'l-orange');

poly([10,1195,45,1197], X9, Y2, 'l-red2');
poly([285,1200,325,1090,345,1068,370,1108,415,1077,440,1048,460,1058,500,950,525,940,550,955,570,995,595,1015,615,950,640,790,660,665,685,710,705,715,725,670,750,450,773,348,795,385,820,540,860,850,900,1040,950,1160,1030,1198], X9, Y2, 'l-red2');
poly([50,1198,100,1165,125,1110,150,1090,170,1040,210,760,240,680,280,588,300,588,320,760,345,910,370,980,390,1000,435,690,458,595,500,860,530,935,560,928,595,908,620,920,700,1045,730,1070,795,1158,895,1162,970,1160,1020,1115,1040,1065,1060,1058,1085,1080,1110,905,1155,755,1175,935,1220,1090,1285,1190,1310,1190,1332,1100], X10, Y2, 'l-red2');

[[12,220],[33,733],[57,705],[78,1033],[100,1020],[124,237],[146,228],[168,202],[190,205],[213,188],[233,427],[258,355],[281,188],[929,183]].forEach(b => rect(X9(b[0]) - 3.5, Y2(95), 7, Y2(b[1]) - Y2(95), 'bar-green'));
[[1017,490],[1065,993],[1085,453],[1153,1070],[1266,556],[1287,908],[1310,530],[1331,490],[1354,1078],[1399,854],[1423,1033],[1444,1052],[1467,480],[1488,674],[1511,430]].forEach(b => rect(X9(b[0]) - 3.5, Y2(395), 7, Y2(b[1]) - Y2(395), 'bar-green'));
[[1266,170],[1287,723],[1311,190]].forEach(b => rect(X10(b[0]) - 3.5, Y2(95), 7, Y2(b[1]) - Y2(95), 'bar-green'));
line(X9(5), Y2(96), X9(940), Y2(96), 'line-green');
line(X10(1255), Y2(96), X10(1337), Y2(96), 'line-green');
line(6, Y2(1038), X10(1333), Y2(1038), 'line-blue');
line(6, Y2(1205), X10(1333), Y2(1205), 'line-yellow');

/* ---- third panel ---- */
line(6, Y3(449), X10(1330), Y3(449), 'line-zero');
[
  [10,438,35,438,50,447],
  [105,447,122,430,148,430,170,415,215,417,235,432,280,435,303,393,335,402,370,432,390,393,415,393,460,430,482,398,525,402,548,420,598,420,615,408,660,352,683,378,705,368,725,340,750,252,775,310,795,360,818,447],
  [865,447,885,420,930,420,950,434,1000,434,1012,447],
  [1070,447,1105,430,1135,430,1165,444,1230,444],
  [1362,447,1378,430,1430,430,1445,440,1500,435,1520,440,1535,425,1568,422]
].forEach(p => poly(p, X9, Y3, 'l-yel2'));
[
  [0,420,10,415,30,438,50,425,80,425,100,408,130,405,170,418,190,435,215,435,255,300,280,300,325,447,345,403,370,403,390,360,415,270,438,122,460,170,505,447],
  [530,447,570,353,595,353,637,447],
  [713,445,725,438,775,438,785,445,800,447,815,435,840,435,860,408,885,422,910,422,930,447,950,438,975,438,995,400,1018,408,1040,380,1065,422,1085,422,1110,367,1130,367,1153,310,1175,388,1198,358,1222,422,1250,422,1258,417,1290,417,1310,405,1330,370]
].forEach(p => poly(p, X10, Y3, 'l-yel2'));
poly([10,457,30,470,58,497,75,492,98,488,125,450,145,468,168,433,188,445,210,420,235,438,250,444,280,444,303,395,330,440,370,485,392,405,415,420,440,450,460,470,483,412,525,425,548,440,598,435,615,425,640,370,660,352,685,458,725,420,750,252,818,625,858,602,885,513,928,475,950,490,995,465,1018,497,1040,490,1065,485,1100,450,1135,445,1155,467,1185,467,1200,461,1225,466,1245,480,1265,485,1305,470,1355,470,1375,450,1395,455,1445,470,1465,452,1480,443,1505,447,1530,433,1568,430], X9, Y3, 'l-red3');
poly([0,428,10,423,35,458,50,430,75,435,100,410,125,403,145,430,170,430,190,460,213,555,255,425,280,470,300,650,325,775,345,560,372,490,390,400,415,320,438,122,490,447,503,615,525,580,570,385,595,388,640,545,660,528,685,485,710,465,725,438,750,492,795,555,815,484,838,475,860,428,885,466,905,460,930,507,955,470,975,470,995,415,1018,447,1040,402,1065,462,1085,462,1110,410,1130,480,1153,400,1175,525,1198,410,1225,495,1235,489,1280,487,1310,435,1330,403], X10, Y3, 'l-red3');

/* ---- trades table ---- */
const T = [
['14:55','23.48','1.2','B','3'],['14:55','23.48','3.8','B','7'],['14:55','23.46','0.5','S','2'],['14:56','23.46','0.5','S','2'],['14:56','23.45','0.9','S','4'],['14:56','23.45','0.9','S','4'],['14:56','23.47','1.4','B','4'],
['14:56','23.47','1.2','B','3'],['14:56','23.47','1.4','B','4'],['14:56','23.47','0.2','B','1'],['14:56','23.47','5.4','','7'],['14:56','23.47','8.9','S','9'],['14:56','23.46','2.6','S','7'],['14:56','23.48','2.8','B','6'],
['14:56','23.48','3.5','B','6'],['14:56','23.48','2.1','B','2'],['14:56','23.48','8.7','B','7'],['14:56','23.50','16.2','B','16'],['14:56','23.49','0.2','S','1'],['14:57','23.48','4.2','S','1'],['15:00','23.58','176.1','','143']
];
const box = document.getElementById('trades');
T.forEach(r => {
  const row = document.createElement('div');
  row.className = 'trade-row';
  const volCls = r[0] === '15:00' ? 'mag' : 'vol';
  const sideCls = r[3] === 'B' ? 'side-b' : 'side-s';
  row.innerHTML = `<b class="time">${r[0]}</b><b class="up">${r[1]}</b><b class="${volCls}">${r[2]}<i>万</i></b><b class="side ${sideCls}">${r[3]}</b><b class="cnt">${r[4]}</b>`;
  box.appendChild(row);
});
```
